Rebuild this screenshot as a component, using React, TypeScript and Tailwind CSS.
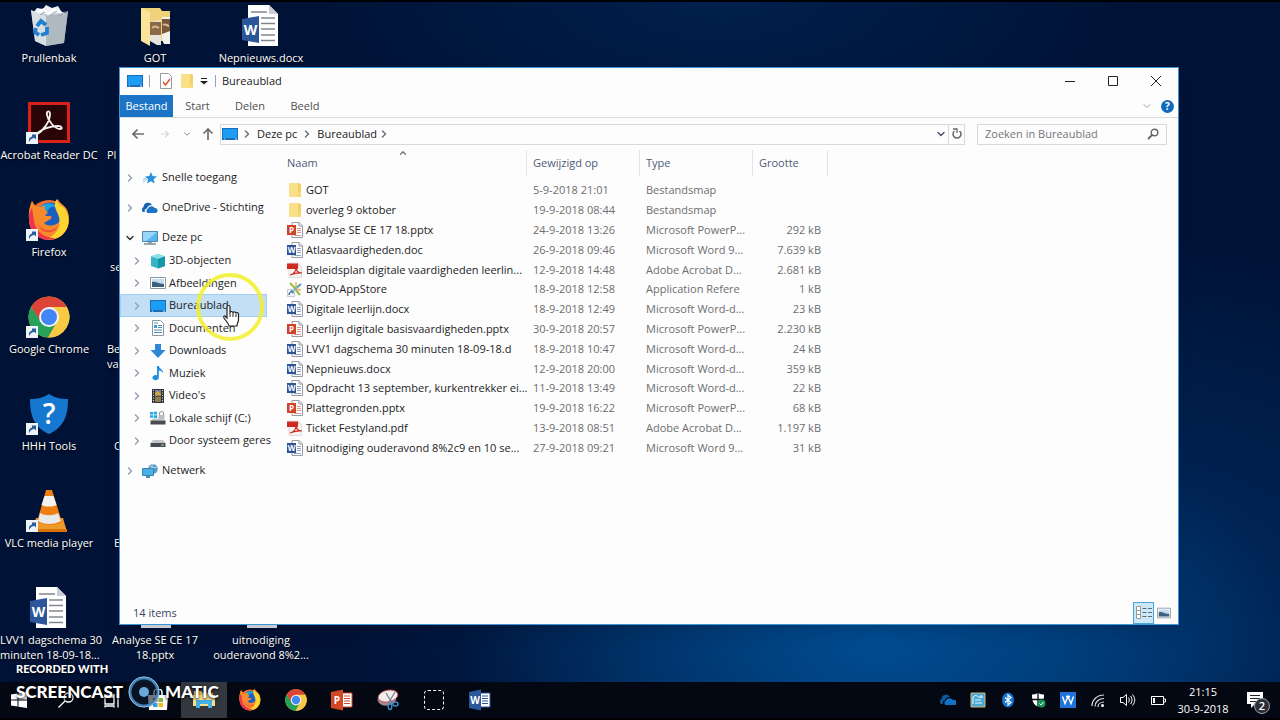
import type { ReactNode } from "react";
import clsx from "clsx";
import { ChevronDown, ChevronRight } from "lucide-react";

type IconProps = { className?: string };

type FileRow = {
  name: string;
  date: string;
  type: string;
  size: string;
  icon: (p: IconProps) => ReactNode;
};

/* ---------- file and folder icons ---------- */

function FolderIcon({ className }: IconProps) {
  return (
    <svg viewBox="0 0 16 16" className={className} aria-hidden="true">
      <path d="M2 1h10l2 1v13H2z" fill="#f3cf66" />
      <path d="M2 1h9v14H2z" fill="#fbe08a" />
      <path d="M11 10h3v5h-4z" fill="#f8d877" />
    </svg>
  );
}

function OfficeFileIcon({ className, letter, color }: IconProps & { letter: string; color: string }) {
  return (
    <svg viewBox="0 0 16 16" className={className} aria-hidden="true">
      <path d="M5 .5h7l3.500 3.500v11.500H5z" fill="#fff" stroke="#9a9aa2" />
      <path d="M12 .5V4h3.500" fill="none" stroke="#9a9aa2" />
      <path d="M10 6.500h4M10 8.500h4M10 10.500h4M7 13.500h7" stroke={color} opacity=".55" />
      <path d="M0 3h9v10H0z" fill={color} />
      <text x="4.500" y="10.800" fontSize="8" fontWeight="700" textAnchor="middle" fill="#fff" fontFamily="Open Sans, sans-serif">
        {letter}
      </text>
    </svg>
  );
}

function WordFile(p: IconProps) {
  return <OfficeFileIcon {...p} letter="W" color="#2f5597" />;
}

function PptFile(p: IconProps) {
  return <OfficeFileIcon {...p} letter="P" color="#cf432a" />;
}

function PdfFile({ className }: IconProps) {
  return (
    <svg viewBox="0 0 16 16" className={className} aria-hidden="true">
      <path d="M2 1h9l3.500 3.500V15.500H2z" fill="#f6f3f3" stroke="#cfc8c8" strokeWidth=".6" />
      <path d="M0 1.500h11V7H0z" fill="#cf2a22" />
      <path d="M3 13c4-1 6-4 6-8 0 4 2 6 6 6-4-.5-8 .5-12 2z" fill="none" stroke="#cf2a22" strokeWidth="1.100" />
      <path d="M11 1l3.500 3.500H11z" fill="#e9dada" />
    </svg>
  );
}

function AppRefIcon({ className }: IconProps) {
  return (
    <svg viewBox="0 0 16 16" className={className} aria-hidden="true">
      <path d="M3 2l5 5M13 14l-4-5" stroke="#a0bd45" strokeWidth="2.200" />
      <path d="M14 3L8 8" stroke="#4ba3c7" strokeWidth="2.200" />
      <path d="M9 1v6M8 8l6 1" stroke="#e8b743" strokeWidth="1.500" />
      <circle cx="8" cy="8" r="1.500" fill="#77a6b8" />
      <path d="M.5 8.500h7v7h-7z" fill="#f4f8fc" stroke="#a9b8c8" strokeWidth=".7" />
      <path d="M2 14c0-2 1-3 3-3M3.500 10H6v2.500" fill="none" stroke="#2b5d9c" strokeWidth="1.200" />
    </svg>
  );
}

/* ---------- navigation pane icons ---------- */

function MonitorIcon({ className }: IconProps) {
  return (
    <svg viewBox="0 0 16 14" className={className} aria-hidden="true">
      <path d="M0 1h16v12H0z" fill="#1b6fb8" />
      <path d="M1 2h14v9H1z" fill="#1c9cf2" />
      <path d="M2 12h1M13 12h2" stroke="#cfe8fb" />
    </svg>
  );
}

function StarIcon({ className }: IconProps) {
  return (
    <svg viewBox="0 0 16 16" className={className} aria-hidden="true">
      <path d="M9 2l1.600 4 4.400.5-3.400 2.800 1 4.300L8.800 11.300 5 13.600l1.100-4.300L3 6.500 7.300 6z" fill="#2b8fdc" />
      <path d="M1 12l4-3M1 9.500l3-1.500" stroke="#7cc0ee" />
    </svg>
  );
}

function OneDriveIcon({ className }: IconProps) {
  return (
    <svg viewBox="0 0 16 16" className={className} aria-hidden="true">
      <path d="M1 12a3 3 0 0 1 .6-5A4.500 4.500 0 0 1 10 5c-3 0-4.500 1.500-5 3.500C3 8.700 2 10.500 3 12z" fill="#1263b0" />
      <path d="M5.500 13a2.500 2.500 0 0 1 .3-4.300A4 4 0 0 1 12.800 8 2.600 2.600 0 0 1 14 13z" fill="#1b74c5" />
    </svg>
  );
}

function PcIcon({ className }: IconProps) {
  return (
    <svg viewBox="0 0 16 16" className={className} aria-hidden="true">
      <path d="M.5 1.500h15v10H.5z" fill="#5bb5ee" stroke="#4b87ae" />
      <path d="M1 2h14L4 11H1z" fill="#9ad6f8" />
      <path d="M6 12h4v1.500H6z" fill="#9aa4ac" />
      <path d="M2 14h12" stroke="#73818c" strokeWidth="1.400" />
    </svg>
  );
}

function CubeIcon({ className }: IconProps) {
  return (
    <svg viewBox="0 0 16 16" className={className} aria-hidden="true">
      <path d="M8 1l7 2.500v9.500L8 15.500 1 13V3.500z" fill="#35b5c4" />
      <path d="M8 1l7 2.500L8 6 1 3.500z" fill="#8be0e8" />
      <path d="M8 6l7-2.500v9.500L8 15.500z" fill="#1796a8" />
    </svg>
  );
}

function PictureIcon({ className }: IconProps) {
  return (
    <svg viewBox="0 0 16 16" className={className} aria-hidden="true">
      <path d="M.5 2.500h15v11H.5z" fill="#fff" stroke="#8d98a3" />
      <path d="M2 4h12v8H2z" fill="#c3dcf0" />
      <path d="M2 7c4-1 6 2 12 2v3H2z" fill="#3c5f80" />
    </svg>
  );
}

function DocIcon({ className }: IconProps) {
  return (
    <svg viewBox="0 0 16 16" className={className} aria-hidden="true">
      <path d="M2.500.5h8l3 3v12h-11z" fill="#fff" stroke="#8c969e" />
      <path d="M4 5h3v3H4z" fill="#3f9bd1" />
      <path d="M8 5.500h4M8 7.500h4M4 10h8M4 12.500h8M4 3h4" stroke="#4e8fb3" />
    </svg>
  );
}

function DownloadIcon({ className }: IconProps) {
  return (
    <svg viewBox="0 0 16 16" className={className} aria-hidden="true">
      <path d="M5 1h6v6h4.500L8 15 .5 7H5z" fill="#2d86d6" />
    </svg>
  );
}

function MusicIcon({ className }: IconProps) {
  return (
    <svg viewBox="0 0 16 16" className={className} aria-hidden="true">
      <path d="M7 1h1.800c.4 3 4.700 3 4.200 7.500-.6-2-2-2.700-4.200-3V12.500A3.200 2.600 0 1 1 7 10.300z" fill="#1d8ee0" />
    </svg>
  );
}

function VideoIcon({ className }: IconProps) {
  return (
    <svg viewBox="0 0 16 16" className={className} aria-hidden="true">
      <path d="M2 1h12v14H2z" fill="#30343a" />
      <path d="M5 2h6v5.500H5z" fill="#6f7ea8" />
      <path d="M5 8.500h6V14H5z" fill="#8d7b4c" />
      <path d="M5 5l3-2 3 3v1.500H5z" fill="#cfa83e" />
      <path d="M3.500 2v13M12.500 2v13" stroke="#e5e5e5" strokeDasharray="1 1.500" />
    </svg>
  );
}

function DriveIcon({ className }: IconProps) {
  return (
    <svg viewBox="0 0 16 16" className={className} aria-hidden="true">
      <path d="M3 7h10l2.500 3H.5z" fill="#c2c6ca" />
      <path d="M.5 10h15v4H.5z" fill="#474b50" />
      <path d="M11 12h3" stroke="#b9d6c0" />
    </svg>
  );
}

function SystemDriveIcon({ className }: IconProps) {
  return (
    <svg viewBox="0 0 16 16" className={className} aria-hidden="true">
      <path d="M0 2h3v2.500H0zM3.700 1.700H7v2.800H3.700zM0 5.200h3v2.500H0zM3.700 5.200H7V8H3.700z" fill="#28a8e2" />
      <path d="M9.500 5V3.500a2 2 0 0 1 4 0V5" fill="none" stroke="#9aa0a6" strokeWidth="1.200" />
      <path d="M8.500 5h6v4h-6z" fill="#b9bec3" />
      <path d="M3 8.500h10l2.500 2H.5z" fill="#c2c6ca" />
      <path d="M.5 10.500h15v4H.5z" fill="#474b50" />
    </svg>
  );
}

function NetworkIcon({ className }: IconProps) {
  return (
    <svg viewBox="0 0 16 16" className={className} aria-hidden="true">
      <circle cx="11" cy="6" r="4.800" fill="#5a9bc4" />
      <path d="M8 3c2 2 5 2 7 1M11 1c-2 3-1 7 1 9" stroke="#b8dcf0" fill="none" />
      <path d="M.5 5.500h11v7H.5z" fill="#4ab0ea" stroke="#3d83ad" />
      <path d="M4 13h4v2H4z" fill="#4f8cb0" />
    </svg>
  );
}

/* ---------- application icons ---------- */

function FirefoxIcon({ className }: IconProps) {
  return (
    <svg viewBox="0 0 42 42" className={className} aria-hidden="true">
      <circle cx="21" cy="21" r="20" fill="#f9702b" />
      <path d="M1 19C1 11 2 7 4 2c2 4 4 5 7 6l-4 16z" fill="#f9602f" />
      <circle cx="22" cy="17" r="13.500" fill="#1a5fc4" />
      <path d="M12 8c5-5 13-5 17 0-5-1-9 1-10 5z" fill="#18a4e6" />
      <path d="M4 2c2 4 4 6 8 6 2 0 4-1 5-2-1 3 0 6 3 7l-3 4h6c1 2 0 3-2 4l-5 3c4 4 12 3 15-1 4-5 3-10 0-14-3-3-4-6-1-9 1 4 5 5 8 9 5 8 3 19-4 25-9 8-23 6-29-3C-1 23 0 11 4 2z" fill="#f98a2b" />
      <path d="M29 0c0 5 5 6 8 10 6 9 4 20-3 26-5 4-11 5-16 4 11-4 15-13 13-22C29 11 24 7 29 0z" fill="#fdd430" />
      <path d="M1 19c0 10 5 18 14 21 4 1 8 1 12-1-11 0-19-6-21-17L4 9c-2 3-3 6-3 10z" fill="#ee3350" />
      <path d="M9 23c4 10 15 11 21 4-3 8-17 10-21-4z" fill="#f0483a" />
    </svg>
  );
}

function ChromeIcon({ className }: IconProps) {
  return (
    <svg viewBox="0 0 42 42" className={className} aria-hidden="true">
      <circle cx="21" cy="21" r="20.500" fill="#f8ca43" />
      <path d="M38.800 11H21l8 14.500-9 16A20.500 20.500 0 0 0 38.800 11z" fill="#f8ca43" />
      <path d="M3.200 10.800A20.500 20.500 0 0 0 20 41.500l9-16-8 3.500-8-4z" fill="#27a05a" />
      <path d="M3.200 10.800L13 26l8-5V11h17.800A20.500 20.500 0 0 0 3.200 10.800z" fill="#db4437" />
      <circle cx="21" cy="21" r="10" fill="#f4f4f4" />
      <circle cx="21" cy="21" r="8" fill="#4285f4" />
    </svg>
  );
}

function RecycleIcon({ className }: IconProps) {
  return (
    <svg viewBox="0 0 42 42" className={className} aria-hidden="true">
      <path d="M5 8l4-5 6 1 3-4 6 3 6-2 3 5 5 3-3 5H7z" fill="#eef1f4" />
      <path d="M3 5l7 4 26 1 4-4-4 32-18 3L7 36z" fill="#bcc5cd" />
      <path d="M3 5l15 6v30L7 36z" fill="#dde3e8" opacity=".85" />
      <path d="M18 11l22-5-4 32-18 3z" fill="#aab3bb" opacity=".7" />
      <path d="M10 7l6-3 4 5 6-5 7 4" stroke="#fff" strokeWidth="2" fill="none" />
      <path d="M12 10l5-3M23 10l6-4M30 11l5-2" stroke="#97a1aa" strokeWidth="1" fill="none" />
      <g fill="none" stroke="#1f7fd0" strokeWidth="3.800">
        <path d="M9 21l4-5 5 4" />
        <path d="M19 22l0 6-6 2" />
        <path d="M11 30l-4-3 1-4" />
      </g>
    </svg>
  );
}

function PhotoFolderIcon({ className }: IconProps) {
  return (
    <svg viewBox="0 0 42 42" className={className} aria-hidden="true">
      <path d="M7 3h19l2 3h8v30H7z" fill="#f0d27b" />
      <path d="M16 17l11-2v25h-4l-7-4z" fill="#e8e4dc" />
      <path d="M16 17h11v13H16z" fill="#8a6848" />
      <path d="M28 12h8v27h-6l-2-4z" fill="#f5f2ea" />
      <path d="M28 14h8v12l-8 3z" fill="#77563c" />
      <path d="M18 23c3-3 5-1 7 0M29 20c3-2 4 1 6 1" stroke="#d8bb93" strokeWidth="2" fill="none" />
      <path d="M7 3l9 4v34L7 36z" fill="#fbe39a" />
    </svg>
  );
}

function BlankDocIcon({ className }: IconProps) {
  return (
    <svg viewBox="0 0 42 42" className={className} aria-hidden="true">
      <path d="M7 0h21l9 9v32H7z" fill="#dfe3ea" />
    </svg>
  );
}

function WordDocIcon({ className }: IconProps) {
  return (
    <svg viewBox="0 0 42 42" className={className} aria-hidden="true">
      <path d="M8 0h21l9 9v32H8z" fill="#fff" />
      <path d="M29 0v9h9z" fill="#c9ced6" />
      <path d="M11 7h16M21 13h14M21 18.500h14M21 24h14M21 30h14M21 35.500h14" stroke="#82868c" strokeWidth="1.500" />
      <path d="M2 14l17-3v27L2 35z" fill="#2b579a" />
      <text x="10.500" y="30" fontSize="14" fontWeight="700" textAnchor="middle" fill="#fff" fontFamily="Open Sans, sans-serif">
        W
      </text>
    </svg>
  );
}

function AcrobatIcon({ className }: IconProps) {
  return (
    <svg viewBox="0 0 42 42" className={className} aria-hidden="true">
      <path d="M1.500 1.500h39v38h-39z" fill="#2a0505" stroke="#d9201a" strokeWidth="3" />
      <path d="M9 32c6-3 13-12 13-20 0-4-4-3-3 1 1 6 8 14 13 14 3 0 2-3-2-3-7 0-17 3-21 8z" fill="none" stroke="#f4f0f0" strokeWidth="1.800" />
    </svg>
  );
}

function ShieldIcon({ className }: IconProps) {
  return (
    <svg viewBox="0 0 42 42" className={className} aria-hidden="true">
      <path d="M21 1c6 4 12 5 19 5 0 17-4 28-19 35C6 34 2 23 2 6c7 0 13-1 19-5z" fill="#1577d0" />
      <text x="21" y="31" fontSize="28" fontWeight="600" textAnchor="middle" fill="#fff" fontFamily="Open Sans, sans-serif">
        ?
      </text>
    </svg>
  );
}

function VlcIcon({ className }: IconProps) {
  return (
    <svg viewBox="0 0 42 42" className={className} aria-hidden="true">
      <path d="M8 28h27l4 14H4z" fill="#f09a2c" />
      <path d="M4 39h35v3H4z" fill="#d97308" />
      <path d="M18 0h6l10 32c-7 4-18 4-25 0z" fill="#f07f13" />
      <path d="M16.500 6h9l3 9c-4 2-11 2-15 0z" fill="#f2f2f2" />
      <path d="M12 23c5 3 13 3 18 0l3 8c-7 4-17 4-23 0z" fill="#e9e9e9" />
    </svg>
  );
}

function ShortcutArrow() {
  return (
    <svg viewBox="0 0 12 12" className="absolute bottom-0 -left-0.5 size-3" aria-hidden="true">
      <path d="M0 0h12v12H0z" fill="#eef3f8" />
      <path d="M3 10c-.5-3 .5-5 3-5.500V2.500h4v5L8.500 6C6 6 4.500 7.500 3 10z" fill="#2a5f9e" />
    </svg>
  );
}

/* ---------- data ---------- */

const files: FileRow[] = [
  { name: "GOT", date: "5-9-2018 21:01", type: "Bestandsmap", size: "", icon: FolderIcon },
  { name: "overleg 9 oktober", date: "19-9-2018 08:44", type: "Bestandsmap", size: "", icon: FolderIcon },
  { name: "Analyse SE CE 17 18.pptx", date: "24-9-2018 13:26", type: "Microsoft PowerP...", size: "292 kB", icon: PptFile },
  { name: "Atlasvaardigheden.doc", date: "26-9-2018 09:46", type: "Microsoft Word 9...", size: "7.639 kB", icon: WordFile },
  { name: "Beleidsplan digitale vaardigheden leerlin...", date: "12-9-2018 14:48", type: "Adobe Acrobat D...", size: "2.681 kB", icon: PdfFile },
  { name: "BYOD-AppStore", date: "18-9-2018 12:58", type: "Application Refere", size: "1 kB", icon: AppRefIcon },
  { name: "Digitale leerlijn.docx", date: "18-9-2018 12:49", type: "Microsoft Word-d...", size: "23 kB", icon: WordFile },
  { name: "Leerlijn digitale basisvaardigheden.pptx", date: "30-9-2018 20:57", type: "Microsoft PowerP...", size: "2.230 kB", icon: PptFile },
  { name: "LVV1 dagschema 30 minuten 18-09-18.d", date: "18-9-2018 10:47", type: "Microsoft Word-d...", size: "24 kB", icon: WordFile },
  { name: "Nepnieuws.docx", date: "12-9-2018 20:00", type: "Microsoft Word-d...", size: "359 kB", icon: WordFile },
  { name: "Opdracht 13 september, kurkentrekker ei...", date: "11-9-2018 13:49", type: "Microsoft Word-d...", size: "22 kB", icon: WordFile },
  { name: "Plattegronden.pptx", date: "19-9-2018 16:22", type: "Microsoft PowerP...", size: "68 kB", icon: PptFile },
  { name: "Ticket Festyland.pdf", date: "13-9-2018 08:51", type: "Adobe Acrobat D...", size: "1.197 kB", icon: PdfFile },
  { name: "uitnodiging ouderavond 8%2c9 en 10 se...", date: "27-9-2018 09:21", type: "Microsoft Word 9...", size: "31 kB", icon: WordFile },
];

const pcItems = [
  { label: "3D-objecten", icon: CubeIcon },
  { label: "Afbeeldingen", icon: PictureIcon },
  { label: "Bureaublad", icon: MonitorIcon, selected: true },
  { label: "Documenten", icon: DocIcon },
  { label: "Downloads", icon: DownloadIcon },
  { label: "Muziek", icon: MusicIcon },
  { label: "Video's", icon: VideoIcon },
  { label: "Lokale schijf (C:)", icon: SystemDriveIcon },
  { label: "Door systeem geres", icon: DriveIcon },
];

/* ---------- desktop ---------- */

function Shortcut({ label, icon: Icon, link }: { label: string; icon: (p: IconProps) => ReactNode; link?: boolean }) {
  return (
    <li className="h-[97px] pt-[5px] text-center">
      <div className="relative mx-auto mb-[3px] size-[42px]">
        <Icon className="size-[42px]" />
        {link && <ShortcutArrow />}
      </div>
      <span className="block text-[11px] leading-[15px] whitespace-pre text-white [text-shadow:0_1px_2px_#000]">{label}</span>
    </li>
  );
}

/* Icon whose middle is covered by the window, only the start of its label shows. */
function CoveredShortcut({ label, className }: { label: string; className?: string }) {
  return (
    <li className={clsx("h-[97px] pt-[50px]", className)}>
      <span className="block text-[11px] leading-[15px] whitespace-pre text-white [text-shadow:0_1px_2px_#000]">{label}</span>
    </li>
  );
}

function Desktop() {
  return (
    <div className="flex gap-2">
      <ul className="w-[98px]">
        <Shortcut label="Prullenbak" icon={RecycleIcon} />
        <Shortcut label="Acrobat Reader DC" icon={AcrobatIcon} link />
        <Shortcut label="Firefox" icon={FirefoxIcon} link />
        <Shortcut label="Google Chrome" icon={ChromeIcon} link />
        <Shortcut label="HHH Tools" icon={ShieldIcon} link />
        <Shortcut label="VLC media player" icon={VlcIcon} link />
        <Shortcut label={"LVV1 dagschema 30\nminuten 18-09-18..."} icon={WordDocIcon} />
      </ul>
      <ul className="w-[98px]">
        <Shortcut label="GOT" icon={PhotoFolderIcon} />
        <CoveredShortcut label="Pl" className="pl-px" />
        <CoveredShortcut label={"\nse"} className="pl-1" />
        <CoveredShortcut label={"Be\nva"} className="pl-px" />
        <CoveredShortcut label="C" className="pl-2" />
        <CoveredShortcut label="E" className="pl-2" />
        <Shortcut label={"Analyse SE CE 17\n18.pptx"} icon={BlankDocIcon} />
      </ul>
      <ul className="flex w-[98px] flex-col justify-between">
        <Shortcut label="Nepnieuws.docx" icon={WordDocIcon} />
        <Shortcut label={"uitnodiging\nouderavond 8%2..."} icon={BlankDocIcon} />
      </ul>
    </div>
  );
}

/* ---------- explorer window ---------- */

function TitleBar() {
  return (
    <header className="flex h-[27px] items-center pr-px pb-px pl-[7px]">
      <MonitorIcon className="h-3.5 w-4" />
      <span className="ml-1.5 h-3 w-px bg-gray-400" />
      <svg viewBox="0 0 12 16" className="ml-2.5 h-4 w-3" aria-hidden="true">
        <path d="M.5.500h8l3 3v12H.5z" fill="#fff" stroke="#9a9a9a" />
        <path d="M3 9l2.500 3L10 6" fill="none" stroke="#d9532c" strokeWidth="1.500" />
      </svg>
      <FolderIcon className="ml-[7px] size-4" />
      <button type="button" aria-label="Werkbalk aanpassen" className="ml-[5px]">
        <svg viewBox="0 0 8 8" className="size-2" aria-hidden="true">
          <path d="M1 1.500h6" stroke="#222" />
          <path d="M0 4h8L4 7.500z" fill="#222" />
        </svg>
      </button>
      <span className="ml-[7px] h-3 w-px bg-gray-400" />
      <h1 className="ml-1.5 grow text-[11px] text-[#222]">Bureaublad</h1>
      <button type="button" aria-label="Minimaliseren" className="flex h-full w-[43px] items-center justify-center">
        <svg viewBox="0 0 10 10" className="size-2.5" aria-hidden="true">
          <path d="M0 5.500h10" stroke="#222" />
        </svg>
      </button>
      <button type="button" aria-label="Maximaliseren" className="flex h-full w-[43px] items-center justify-center">
        <svg viewBox="0 0 10 10" className="size-2.5" aria-hidden="true">
          <path d="M.5.500h9v9h-9z" stroke="#222" fill="none" />
        </svg>
      </button>
      <button type="button" aria-label="Sluiten" className="flex h-full w-[43px] items-center justify-center">
        <svg viewBox="0 0 10 10" className="size-2.5" aria-hidden="true">
          <path d="M0 0l10 10M10 0L0 10" stroke="#222" />
        </svg>
      </button>
    </header>
  );
}

function Ribbon() {
  return (
    <nav className="flex h-[23px] items-center border-b border-[#dcdde0] text-[11px] text-[#505050]" aria-label="Lint">
      <button type="button" className="h-full w-[53px] bg-[#1b74c5] text-white">
        Bestand
      </button>
      <button type="button" className="w-[49px]">
        Start
      </button>
      <button type="button" className="w-[56px]">
        Delen
      </button>
      <button type="button" className="w-[54px]">
        Beeld
      </button>
      <button type="button" aria-label="Lint uitvouwen" className="ml-auto">
        <ChevronDown className="size-3 text-gray-400" />
      </button>
      <button type="button" aria-label="Help" className="mr-1 ml-2 size-[13px] rounded-full bg-[#0f6cbd] text-[10px] leading-[13px] font-bold text-white">
        ?
      </button>
    </nav>
  );
}

function ArrowLeft({ className }: IconProps) {
  return (
    <svg viewBox="0 0 12 12" className={className} fill="none" stroke="currentColor" strokeWidth="1.700" aria-hidden="true">
      <path d="M12 6H1M5.500 1.500L1 6l4.500 4.500" />
    </svg>
  );
}

function AddressBar() {
  return (
    <div className="flex h-8 items-center pr-[11px] pl-3 text-[#6d6d6d]">
      <button type="button" aria-label="Vorige">
        <ArrowLeft className="size-3" />
      </button>
      <button type="button" aria-label="Volgende" className="ml-[17px]">
        <ArrowLeft className="size-2 rotate-180 text-gray-300" />
      </button>
      <button type="button" aria-label="Recente locaties" className="ml-[13px]">
        <ChevronDown className="size-2.5 text-gray-500" />
      </button>
      <button type="button" aria-label="Omhoog" className="ml-2.5">
        <ArrowLeft className="size-3 rotate-90" />
      </button>
      <div className="ml-1.5 flex h-[21px] grow items-center border border-[#d9d9d9] text-[11px] text-[#222]">
        <MonitorIcon className="ml-px h-3.5 w-4" />
        <ChevronRight className="ml-[3px] size-3 text-gray-500" strokeWidth={3} />
        <a href="#deze-pc" className="ml-1">Deze pc</a>
        <ChevronRight className="ml-1 size-3 text-gray-500" strokeWidth={3} />
        <a href="#bureaublad" className="ml-1">Bureaublad</a>
        <ChevronRight className="ml-px size-3 text-gray-500" strokeWidth={3} />
        <button type="button" aria-label="Vorige locaties" className="mr-px ml-auto">
          <ChevronDown className="size-3 text-gray-600" strokeWidth={3} />
        </button>
        <button type="button" aria-label="Vernieuwen" className="flex h-full w-4 items-center justify-center border-l border-[#d9d9d9]">
          <svg viewBox="0 0 12 12" className="size-3" aria-hidden="true">
            <path d="M8.500 3A4 4 0 1 1 3.500 3" fill="none" stroke="#666" strokeWidth="1.500" />
            <path d="M2 1h4v4" fill="none" stroke="#666" strokeWidth="1.300" />
          </svg>
        </button>
      </div>
      <form className="ml-3 flex h-[21px] w-[190px] items-center border border-[#d9d9d9]" role="search">
        <input
          type="search"
          aria-label="Zoeken in Bureaublad"
          placeholder="Zoeken in Bureaublad"
          className="min-w-0 grow pl-[7px] text-[11px] placeholder:text-[#767676] focus:outline-none"
        />
        <button type="submit" aria-label="Zoeken" className="mr-[7px]">
          <svg viewBox="0 0 12 12" className="size-3" fill="none" stroke="#666" aria-hidden="true">
            <circle cx="7.500" cy="4.500" r="3.300" strokeWidth="1.400" />
            <path d="M5 7L1 11" strokeWidth="1.800" />
          </svg>
        </button>
      </form>
    </div>
  );
}

type TreeRowProps = { label: string; icon: (p: IconProps) => ReactNode; open?: boolean };

function TreeRow({ label, icon: Icon, open }: TreeRowProps) {
  return (
    <a href="#map" className="flex h-[23px] items-center pl-1">
      {open ? (
        <ChevronDown className="size-3 shrink-0 text-[#333]" strokeWidth={3} />
      ) : (
        <ChevronRight className="size-3 shrink-0 text-gray-400" strokeWidth={3} />
      )}
      <Icon className="ml-1.5 size-4 shrink-0" />
      <span className="ml-1">{label}</span>
    </a>
  );
}

function NavigationPane() {
  return (
    <nav className="w-[155px] shrink-0 pt-4 text-[11px] whitespace-nowrap text-[#1c1c1c]" aria-label="Navigatiedeelvenster">
      <ul className="space-y-[7px]">
        <li>
          <TreeRow label="Snelle toegang" icon={StarIcon} />
        </li>
        <li>
          <TreeRow label="OneDrive - Stichting" icon={OneDriveIcon} />
        </li>
        <li>
          <TreeRow label="Deze pc" icon={PcIcon} open />
          <ul>
            {pcItems.map(({ label, icon: Icon, selected }) => (
              <li key={label} className="h-[23px] even:h-[22px]">
                <a
                  href="#map"
                  className={clsx("flex h-full items-center pl-[11px]", selected && "mr-2 bg-[#c3dff6] outline -outline-offset-1 outline-[#a5cdee]")}
                >
                  <ChevronRight className="size-3 shrink-0 text-gray-400" strokeWidth={3} />
                  <Icon className="ml-[7px] size-4 shrink-0" />
                  <span className="ml-[3px]">{label}</span>
                </a>
              </li>
            ))}
          </ul>
        </li>
        <li>
          <TreeRow label="Netwerk" icon={NetworkIcon} />
        </li>
      </ul>
    </nav>
  );
}

function FileTable() {
  return (
    <table className="ml-[5px] w-[548px] table-fixed self-start text-left text-[11px] whitespace-nowrap">
      <colgroup>
        <col className="w-[247px]" />
        <col className="w-[113px]" />
        <col className="w-[113px]" />
        <col className="w-[75px]" />
      </colgroup>
      <thead>
        <tr className="h-[30px] align-top text-[#4f5b75]">
          {["Naam", "Gewijzigd op", "Type", "Grootte"].map((title, i) => (
            <th key={title} scope="col" className="relative p-0 font-normal">
              {i === 0 && <ChevronDown className="absolute -top-0.5 left-[118px] size-2.5 rotate-180 text-gray-500" strokeWidth={3} />}
              <span className={clsx("block h-[26px] border-r border-[#e4e4e8] leading-[26px]", i === 0 ? "pl-[7px]" : "pl-1.5")}>
                {title}
              </span>
            </th>
          ))}
        </tr>
      </thead>
      <tbody className="text-[#6d6d6d]">
        {files.map(({ icon: Icon, ...file }) => (
          <tr key={file.name} className="h-5 leading-[18px] nth-[5n]:h-[19px]">
            <td className="p-0 pl-[7px] text-[#1c1c1c]">
              <span className="flex items-center gap-[3px]">
                <Icon className="size-4 shrink-0" />
                {file.name}
              </span>
            </td>
            <td className="p-0 pl-1.5">{file.date}</td>
            <td className="p-0 pl-1.5">{file.type}</td>
            <td className="p-0 pr-[7px] text-right">{file.size}</td>
          </tr>
        ))}
      </tbody>
    </table>
  );
}

function ExplorerWindow() {
  return (
    <section className="absolute top-[67px] right-[101px] bottom-[95px] left-[119px] flex flex-col border border-[#3b96d8] bg-[#fdfdfe] shadow-lg" aria-label="Bureaublad">
      <TitleBar />
      <Ribbon />
      <AddressBar />
      <main className="flex min-h-0 grow">
        <NavigationPane />
        <FileTable />
      </main>
      <footer className="flex h-[22px] items-center pr-1.5 pl-[13px] text-[11px] text-[#3b4560]">
        <span className="grow">14 items</span>
        <button type="button" aria-label="Details" className="flex h-[22px] w-[21px] items-center justify-center border border-[#4ba3d8] bg-[#cbe8f8]">
          <svg viewBox="0 0 16 14" className="h-3.5 w-4" aria-hidden="true">
            <path d="M.5.500h4v12h-4z" fill="#fff" stroke="#999" />
            <path d="M0 4.500h5M0 8.500h5" stroke="#999" />
            <path d="M6.500 2.500h4M12 2.500h4M6.500 6.500h4M12 6.500h4M6.500 10.500h4M12 10.500h4" stroke="#5b6b78" />
          </svg>
        </button>
        <button type="button" aria-label="Grote pictogrammen" className="ml-px flex h-[22px] w-[17px] items-center justify-center">
          <PictureIcon className="size-3.5" />
        </button>
      </footer>
    </section>
  );
}

/* ---------- taskbar ---------- */

function TaskButton({ label, active, children }: { label: string; active?: boolean; children: ReactNode }) {
  return (
    <button type="button" aria-label={label} className={clsx("flex h-full w-[46px] items-center justify-center", active && "bg-[#33383e]")}>
      {children}
    </button>
  );
}

function OfficeAppIcon({ letter, color }: { letter: string; color: string }) {
  return (
    <svg viewBox="0 0 22 22" className="size-[22px]" aria-hidden="true">
      <path d="M11 4h10v14H11z" fill="#fff" stroke={color} />
      <path d="M13 7h6M13 9.500h6M13 12h6M13 14.500h6" stroke={color} />
      <path d="M0 3l12-2.500v21L0 19z" fill={color} />
      <text x="6" y="15" fontSize="10" fontWeight="700" textAnchor="middle" fill="#fff" fontFamily="Open Sans, sans-serif">
        {letter}
      </text>
    </svg>
  );
}

function TrayIcon({ label, children }: { label: string; children: ReactNode }) {
  return (
    <button type="button" aria-label={label} className="flex w-[30px] justify-center">
      <svg viewBox="0 0 16 16" className="size-4" aria-hidden="true">
        {children}
      </svg>
    </button>
  );
}

function Taskbar() {
  return (
    <footer className="absolute inset-x-0 bottom-0 flex h-[38px] items-center border-b-2 border-black bg-[#030812] text-white">
      <button type="button" aria-label="Start" className="flex h-full w-[43px] items-center pl-[11px]">
        <svg viewBox="0 0 16 16" className="size-4" fill="#fff" aria-hidden="true">
          <path d="M0 2.500l6.500-1v6H0zM7.500 1.300L16 0v7.500H7.500zM0 8.500h6.500v6l-6.500-1zM7.500 8.500H16V16l-8.500-1.300z" />
        </svg>
      </button>
      <TaskButton label="Zoeken">
        <svg viewBox="0 0 16 16" className="size-4" fill="none" stroke="#fff" strokeWidth="1.300" aria-hidden="true">
          <circle cx="10.500" cy="5.500" r="4.500" />
          <path d="M7 9L.5 15.500" />
        </svg>
      </TaskButton>
      <TaskButton label="Taakweergave">
        <svg viewBox="0 0 16 16" className="size-4" fill="none" stroke="#fff" strokeWidth="1.300" aria-hidden="true">
          <path d="M1 5h9v7H1zM1 2v1.500h9V2M1 15.500V14h9v1.500M14 3v1M14 6v9.500" />
        </svg>
      </TaskButton>
      <TaskButton label="Store">
        <svg viewBox="0 0 20 22" className="h-[22px] w-5" aria-hidden="true">
          <path d="M6 6V3a4 3 0 0 1 8 0v3" fill="none" stroke="#fff" strokeWidth="1.500" />
          <path d="M0 6h20l-1 15H1z" fill="#fff" />
          <path d="M5 9h4.500v4H5z" fill="#e8542c" />
          <path d="M10.500 9H15v4h-4.500z" fill="#7fb93b" />
          <path d="M5 14h4.500v4H5z" fill="#2f9fe0" />
          <path d="M10.500 14H15v4h-4.500z" fill="#f5b81e" />
        </svg>
      </TaskButton>
      <TaskButton label="Verkenner" active>
        <svg viewBox="0 0 22 20" className="h-5 w-[22px]" aria-hidden="true">
          <path d="M1 1h7l2 2h10v5H1z" fill="#e9b94a" />
          <path d="M0 5h22v11H0z" fill="#fbe08a" />
          <path d="M3 10h16v8h-4v-4H7v4H3z" fill="#45b0e6" />
        </svg>
      </TaskButton>
      <TaskButton label="Firefox">
        <FirefoxIcon className="size-[22px]" />
      </TaskButton>
      <TaskButton label="Google Chrome">
        <ChromeIcon className="size-[22px]" />
      </TaskButton>
      <TaskButton label="PowerPoint">
        <OfficeAppIcon letter="P" color="#d24726" />
      </TaskButton>
      <TaskButton label="Knipprogramma">
        <svg viewBox="0 0 22 22" className="size-[22px]" aria-hidden="true">
          <ellipse cx="10" cy="9.500" rx="9.500" ry="7" fill="#a8878a" transform="rotate(-12 10 9.500)" />
          <ellipse cx="11" cy="7" rx="10" ry="5.800" fill="#f3ecec" stroke="#c2484f" strokeWidth=".8" transform="rotate(-12 11 7)" />
          <path d="M9 4l6 10M18 3l-6 10" stroke="#6f7c88" strokeWidth="1.200" />
          <ellipse cx="13" cy="17.500" rx="1.800" ry="3" fill="none" stroke="#3f8fc4" strokeWidth="1.400" />
          <ellipse cx="18.500" cy="15" rx="2.500" ry="2" fill="none" stroke="#3f8fc4" strokeWidth="1.400" />
        </svg>
      </TaskButton>
      <TaskButton label="Schermopname">
        <span className="size-5 rounded-sm border border-dashed border-white" />
      </TaskButton>
      <TaskButton label="Word">
        <OfficeAppIcon letter="W" color="#2b579a" />
      </TaskButton>

      <div className="ml-auto flex items-center">
        <TrayIcon label="OneDrive">
          <path d="M1 12a3 3 0 0 1 .6-5A4.500 4.500 0 0 1 10 5c-3 0-4.500 1.500-5 3.500C3 8.700 2 10.500 3 12z" fill="#0d5a9f" />
          <path d="M5.500 13a2.500 2.500 0 0 1 .3-4.300A4 4 0 0 1 12.800 8 2.600 2.600 0 0 1 15 13z" fill="#1472c4" />
        </TrayIcon>
        <TrayIcon label="Intel Graphics">
          <path d="M1 1h14v14H1z" fill="#48a9d8" stroke="#d9b773" />
          <path d="M3 12V5c2-2 4-2 5 0h5M5 8h6M5 11h7M11 3v3" stroke="#e9f6fc" fill="none" />
        </TrayIcon>
        <TrayIcon label="Bluetooth">
          <ellipse cx="8" cy="8" rx="6" ry="7.500" fill="#1673d1" />
          <path d="M5 5.500l6 5L8 13V3l3 2.500-6 5" fill="none" stroke="#fff" strokeWidth="1.200" />
        </TrayIcon>
        <TrayIcon label="Beveiliging">
          <path d="M8 1c2 1 4 1.500 6 1.500 0 6-1 10-6 12-5-2-6-6-6-12C4 2.500 6 2 8 1z" fill="#fff" />
          <path d="M8 1v13.500M2 7.500h12" stroke="#030812" strokeWidth="1.300" />
          <circle cx="11.500" cy="11.500" r="4" fill="#149653" />
          <path d="M9.500 11.500l1.500 1.500 2.500-3" stroke="#fff" fill="none" />
        </TrayIcon>
        <TrayIcon label="WRTS">
          <path d="M0 0h16v16H0z" fill="#1f74dc" />
          <path d="M2.500 4.500l2.500 7 3-7 3 7 2.500-7M6 4.500h4" fill="none" stroke="#fff" strokeWidth="1.400" />
        </TrayIcon>
        <TrayIcon label="Netwerk">
          <path d="M2 14C2 8 7 3 14 3M5 14.500c0-4.500 4-8 9-8M8 15c0-3 2.500-5 6-5" fill="none" stroke="#ddd" strokeWidth="1.200" />
          <circle cx="12.500" cy="13.500" r="1.500" fill="#fff" />
        </TrayIcon>
        <TrayIcon label="Volume">
          <path d="M.5 5.500H3L6.500 2.500v11L3 10.500H.5z" fill="none" stroke="#fff" />
          <path d="M8.500 5.500c1 1.500 1 3.500 0 5M10.500 4c2 2.500 2 5.500 0 8M12.500 2.500c3 3.500 3 7.500 0 11" fill="none" stroke="#fff" />
        </TrayIcon>
        <TrayIcon label="Batterij">
          <path d="M1.500 4.500h12v8h-12zM14 7h1.500v3H14" fill="none" stroke="#fff" />
          <path d="M3 6h2v5H3z" fill="#fff" />
        </TrayIcon>
        <div className="w-[60px] text-center text-[11px] leading-[17px]">
          <time className="block">21:15</time>
          <time className="block">30-9-2018</time>
        </div>
        <button type="button" aria-label="Meldingen" className="relative flex w-[47px] justify-center pr-1">
          <svg viewBox="0 0 16 16" className="size-4" aria-hidden="true">
            <path d="M0 0h16v12H8l-4 4v-4H0z" fill="#fff" />
            <path d="M3 3.500h10M3 6.500h10M3 9.500h6" stroke="#222" />
          </svg>
          <span className="absolute top-1.5 left-[21px] size-4 rounded-full border border-gray-400 bg-[#2c2f33] text-[11px] leading-[14px] font-semibold">2</span>
        </button>
      </div>
    </footer>
  );
}

/* ---------- overlays ---------- */

function Watermark() {
  return (
    <div className="absolute bottom-3 left-4 font-['Lato',sans-serif] font-black text-white [text-shadow:0_1px_3px_#000]">
      <p className="text-[11px] leading-[14px]">RECORDED WITH</p>
      <div className="flex h-8 items-center gap-[5px] text-[17px]">
        <span>SCREENCAST</span>
        <svg viewBox="0 0 32 32" className="size-8" aria-hidden="true">
          <circle cx="16" cy="16" r="14" fill="#0c1c30" fillOpacity=".6" stroke="#3f7cb3" strokeWidth="3" />
          <circle cx="16" cy="16" r="15" fill="none" stroke="#a9cbe6" strokeWidth=".8" />
          <circle cx="16" cy="16" r="5" fill="#69a7dc" />
        </svg>
        <span>MATIC</span>
      </div>
    </div>
  );
}

function Pointer() {
  return (
    <svg viewBox="0 0 72 72" className="pointer-events-none absolute top-[271px] left-[194px] size-[72px]" aria-hidden="true">
      <circle cx="36" cy="36" r="32" fill="none" stroke="#f3ef2c" strokeWidth="4" opacity=".85" />
      <path
        d="M33 36c0-2 3-2 3 0v6c0-2 3-2 3 0 0-1.500 3-1.500 3 .5 0-1.500 2.500-1 2.500.5v6c0 2-1.500 3-1.500 6h-8c0-2-3-5-5-8-1-2 .5-2.500 1.500-1.500L33 47z"
        fill="#fff"
        stroke="#222"
        strokeWidth="1.200"
      />
      <path d="M36 42v4M39 42v4M42 43v3" stroke="#222" strokeWidth="1" />
    </svg>
  );
}

export default function App() {
  return (
    <div className="relative h-screen w-full overflow-hidden border-t-2 border-black bg-[#001236] bg-[radial-gradient(ellipse_420px_240px_at_880px_640px,#004c90,transparent),radial-gradient(ellipse_700px_420px_at_1040px_640px,#002f66,transparent),radial-gradient(ellipse_420px_160px_at_720px_0px,#00204c,transparent)] font-['Open_Sans','Noto_Sans',sans-serif]">
      <div className="absolute inset-x-0 -top-0.5 bottom-0">
        <Desktop />
        <ExplorerWindow />
        <Taskbar />
        <Watermark />
        <Pointer />
      </div>
    </div>
  );
}
